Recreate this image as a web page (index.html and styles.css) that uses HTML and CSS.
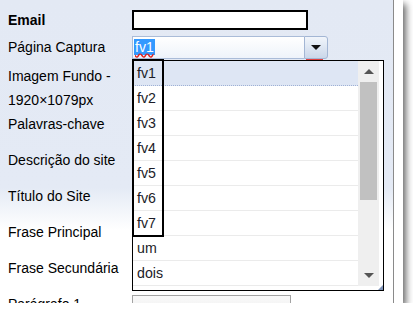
FILE: index.html
```html
<!DOCTYPE html>
<html lang="pt">
<head>
    <meta charset="UTF-8">
    <meta name="viewport" content="width=device-width, initial-scale=1.0">
    <title>Configurações do site</title>
    <link rel="stylesheet" href="styles.css">
</head>
<body>
    <div class="frame">
        <div class="panel">
            <form class="form">
                <div class="row row-email">
                    <label class="lbl lbl-bold" for="email">Email</label>
                    <input class="txt txt-email" type="text" id="email">
                </div>
                <div class="row row-page">
                    <label class="lbl">Página Captura</label>
                    <div class="combo">
                        <span class="combo-text"><span class="combo-sel">fv1</span></span>
                        <span class="combo-btn"><span class="arrow-down"></span></span>
                    </div>
                </div>
                <div class="row row-image">
                    <label class="lbl">Imagem Fundo -<br>1920×1079px</label>
                </div>
                <div class="row"><label class="lbl">Palavras-chave</label></div>
                <div class="row"><label class="lbl">Descrição do site</label></div>
                <div class="row"><label class="lbl">Título do Site</label></div>
                <div class="row"><label class="lbl">Frase Principal</label></div>
                <div class="row"><label class="lbl">Frase Secundária</label></div>
                <div class="row row-para">
                    <label class="lbl">Parágrafo 1</label>
                    <input class="txt txt-plain" type="text">
                </div>
            </form>

            <!-- open list of the combo -->
            <div class="dropdown">
                <ul class="dd-items">
                    <li class="dd-item dd-active">fv1</li>
                    <li class="dd-item">fv2</li>
                    <li class="dd-item">fv3</li>
                    <li class="dd-item">fv4</li>
                    <li class="dd-item">fv5</li>
                    <li class="dd-item">fv6</li>
                    <li class="dd-item">fv7</li>
                    <li class="dd-item">um</li>
                    <li class="dd-item">dois</li>
                </ul>
                <div class="dd-scroll">
                    <div class="sb-btn"><span class="sb-up"></span></div>
                    <div class="sb-track"><div class="sb-thumb"></div></div>
                    <div class="sb-btn"><span class="sb-down"></span></div>
                </div>
                <span class="dd-grip"></span>
            </div>
            <div class="callout"></div>
        </div>
    </div>
</body>
</html>
```

FILE: styles.css
```css
body {
    margin: 0;
    padding: 0;
    background-color: #fff;
    font-family: "Liberation Sans", Arial, sans-serif;
    font-size: 14px;
    color: #000;
}

.frame {
    width: 403px;
    height: 303px;
    background-color: #fff;
    box-shadow: 3px 4px 7px rgba(0, 0, 0, 0.6);
    overflow: hidden;
}

.panel {
    position: relative;
    width: 394px;
    height: 303px;
    box-sizing: border-box;
    border-right: 1px solid #8a8a8a;
    background: linear-gradient(to bottom, #e3e9f4 0%, #e4eaf5 62%, #ffffff 76%);
    overflow: hidden;
}

.form {
    padding-top: 6px;
}

.row {
    display: flex;
    align-items: center;
    height: 36px;
}

.lbl {
    width: 124px;
    padding-left: 8px;
    line-height: 24px;
    flex: none;
}

.lbl-bold {
    font-weight: bold;
}

.row-email {
    height: 28px;
}

.row-page {
    height: 26px;
}

.row-image {
    height: 46px;
    align-items: flex-start;
}

.row-image .lbl {
    padding-top: 4px;
}

.row-para {
    align-items: flex-start;
}

.row-para .lbl {
    padding-top: 6px;
}

.txt {
    margin: 0;
    padding: 0 3px;
    box-sizing: border-box;
    font-family: inherit;
    font-size: inherit;
}

.txt-email {
    width: 176px;
    height: 20px;
    border: 2px solid #000;
    background: #fff;
}

.txt-plain {
    width: 159px;
    height: 22px;
    margin-top: 9px;
    border: 1px solid #a3a3a3;
    background: linear-gradient(to bottom, #fafafa, #ececec);
}

/* combo box */
.combo {
    display: flex;
    width: 196px;
    height: 23px;
}

.combo-text {
    flex: 1;
    display: flex;
    align-items: center;
    padding-left: 1px;
    border: 1px solid #aabcd8;
    border-right: none;
    background: linear-gradient(to bottom, #ffffff, #eef3fa);
}

.combo-sel {
    background-color: #3399ff;
    color: #fff;
    line-height: 16px;
    padding: 0 1px;
    text-decoration: underline wavy #e0201c;
    text-underline-offset: 1px;
}

.combo-btn {
    position: relative;
    width: 24px;
    display: flex;
    align-items: center;
    justify-content: center;
    box-sizing: border-box;
    border: 1px solid #a3b6d4;
    border-radius: 0 3px 3px 0;
    background: linear-gradient(to bottom, #f1f5fb, #cad7ea);
}

.combo-btn::after {
    content: "";
    position: absolute;
    left: 1px;
    right: 4px;
    bottom: -2px;
    height: 1px;
    background-color: #e04040;
}

.arrow-down {
    width: 0;
    height: 0;
    border-left: 5px solid transparent;
    border-right: 5px solid transparent;
    border-top: 5px solid #111;
}

/* dropdown list */
.dropdown {
    position: absolute;
    left: 132px;
    top: 60px;
    width: 252px;
    height: 231px;
    box-sizing: border-box;
    display: flex;
    padding: 0 4px 4px 0;
    border: 1px solid #000;
    background-color: #fff;
}

.dd-items {
    flex: 1;
    margin: 0;
    padding: 0;
    list-style: none;
}

.dd-item {
    height: 24px;
    line-height: 25px;
    padding-left: 4px;
    border-bottom: 1px solid #ebebeb;
    color: #1c1c28;
    font-size: 14.2px;
}

.dd-active {
    background-color: #dee6f4;
    border-bottom: 1px dotted #9fb1d5;
}

.dd-scroll {
    width: 21px;
    display: flex;
    flex-direction: column;
    background-color: #efefef;
}

.sb-btn {
    height: 21px;
    display: flex;
    align-items: center;
    justify-content: center;
}

.sb-track {
    flex: 1;
    padding: 0 2px;
}

.sb-thumb {
    height: 118px;
    background-color: #c1c1c1;
}

.sb-up {
    border-left: 5px solid transparent;
    border-right: 5px solid transparent;
    border-bottom: 5px solid #555;
}

.sb-down {
    border-left: 5px solid transparent;
    border-right: 5px solid transparent;
    border-top: 5px solid #555;
}

.dd-grip {
    position: absolute;
    right: 0;
    bottom: 0;
    width: 0;
    height: 0;
    border-left: 5px solid transparent;
    border-bottom: 5px solid #7f93b8;
}

/* marked options */
.callout {
    position: absolute;
    left: 132px;
    top: 59px;
    width: 32px;
    height: 178px;
    box-sizing: border-box;
    border: 2px solid #000;
}
```
